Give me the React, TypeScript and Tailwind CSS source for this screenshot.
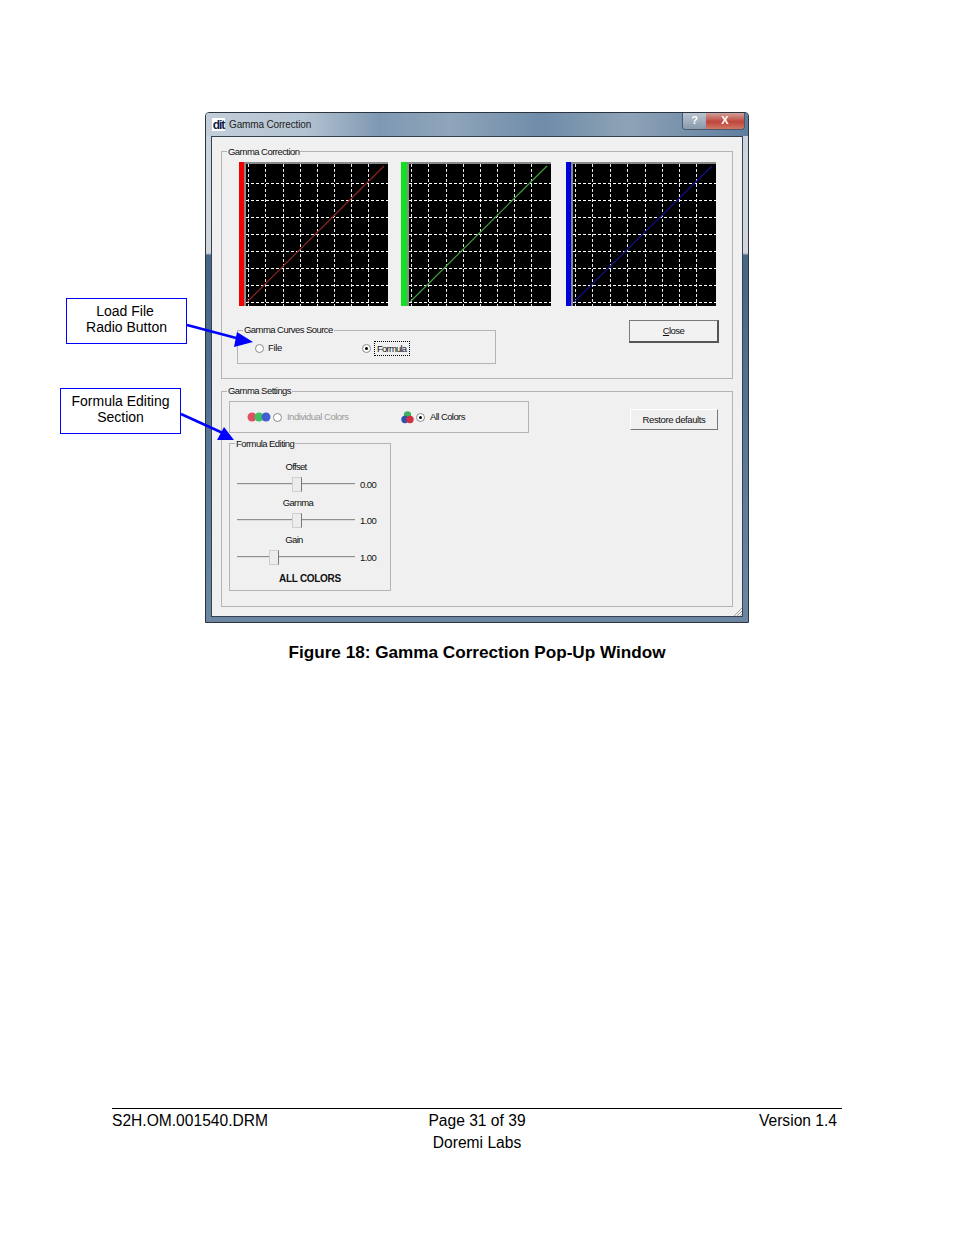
const GRID_X = [2, 19, 37, 54, 71, 88, 105, 122]
const GRID_Y = [19, 36, 53, 70, 87, 104, 121, 138]

const PLOTS = [
  { bar: 'w-[5px] bg-[#f00000]', line: '#8a2424', gap: 'ml-[17px]', width: 'w-[149px]' },
  { bar: 'w-[6px] bg-[#10e020]', line: '#3f9f3f', gap: 'ml-[13px]', width: 'w-[150px]' },
  { bar: 'w-[5px] bg-[#0000d8]', line: '#10108a', gap: 'ml-[15px]', width: 'w-[150px]' },
]

const SLIDERS = [
  { label: 'Offset', value: '0.00', labelPad: 'pl-0', thumb: 'left-[55px]', height: 'h-[36px]' },
  { label: 'Gamma', value: '1.00', labelPad: 'pl-[4px]', thumb: 'left-[55px]', height: 'h-[37px]' },
  { label: 'Gain', value: '1.00', labelPad: 'pr-[4px]', thumb: 'left-[32px]', height: 'h-[36px]' },
]

function Plot({ bar, line, gap, width }: { bar: string; line: string; gap: string; width: string }) {
  return (
    <div className={`flex h-[144px] ${gap} ${width}`}>
      <div className={`shrink-0 ${bar}`} />
      <svg className="h-full flex-1 border-l-2 border-t-2 border-[#8a8a8a] bg-black" viewBox="0 0 142 142" preserveAspectRatio="none">
        {GRID_X.map(x => (
          <line key={x} x1={x + 0.5} y1="0" x2={x + 0.5} y2="142" stroke="#e8e8e8" strokeWidth="1" strokeDasharray="3 2" shapeRendering="crispEdges" />
        ))}
        {GRID_Y.map(y => (
          <line key={y} x1="0" y1={y + 0.5} x2="142" y2={y + 0.5} stroke="#fff" strokeWidth="1" strokeDasharray="3 2" shapeRendering="crispEdges" />
        ))}
        <line x1="1" y1="138" x2="138" y2="2" stroke={line} strokeWidth="1.2" />
      </svg>
    </div>
  )
}

function Group({ title, className, legend, children }: { title: string; className: string; legend: string; children?: React.ReactNode }) {
  return (
    <div className={`relative border border-[#b4b4b4] ${className}`}>
      <span className={`absolute left-[5px] whitespace-nowrap bg-[#f0f0f0] px-px leading-[12px] tracking-[-0.55px] ${legend}`}>{title}</span>
      {children}
    </div>
  )
}

function Radio({ checked }: { checked?: boolean }) {
  return (
    <span className="flex h-[9px] w-[9px] shrink-0 items-center justify-center rounded-full border border-[#8a8a8a] bg-white">
      {checked && <span className="h-[3px] w-[3px] rounded-full bg-black" />}
    </span>
  )
}

function Slider({ label, value, labelPad, thumb, height }: { label: string; value: string; labelPad: string; thumb: string; height: string }) {
  return (
    <div className={height}>
      <div className={`w-[118px] text-center leading-[12px] tracking-[-0.7px] ${labelPad}`}>{label}</div>
      <div className="mt-[4px] flex items-center">
        <div className="relative h-[16px] w-[118px]">
          <div className="absolute top-[6px] h-[2px] w-full border-b border-[#dcdcdc] bg-[#8f8f8f]" />
          <div className={`absolute top-0 h-[15px] w-[10px] border border-[#cfcfcf] border-r-[#777] bg-[#ececec] ${thumb}`} />
        </div>
        <span className="ml-[5px] leading-[12px] tracking-[-0.6px]">{value}</span>
      </div>
    </div>
  )
}

export default function App() {
  return (
    <div className="flex h-[1235px] w-[954px] flex-col bg-white pt-[112px] font-['Liberation_Sans',Arial,sans-serif] text-black">
      <div className="relative ml-[205px] flex h-[511px] w-[544px] flex-col rounded-t-[4px] border border-[#2c3440] bg-[linear-gradient(180deg,#c9d4df_0%,#d2d6da_27.5%,#466686_28%,#6d87a3_100%)]">
        <div className="flex h-[23px] shrink-0 items-center rounded-t-[3px] bg-[linear-gradient(90deg,#c2ced9_0%,#b4c3d2_18%,#7f98b2_32%,#8fa5ba_45%,#6f8ca8_62%,#8ea3b7_78%,#5f7e9e_100%)] pl-[6px]">
          <span className="flex h-[13px] w-[13px] items-center justify-center bg-white text-[12px] font-bold leading-none tracking-[-1px] text-[#10204a]">dit</span>
          <span className="ml-[4px] text-[10px] tracking-[-0.15px] text-[#222]">Gamma Correction</span>
          <div className="ml-auto mr-[3px] flex h-[17px] self-start overflow-hidden rounded-b-[4px] border border-t-0 border-[#48586a] text-[11px] font-bold leading-[14px] text-white">
            <span className="w-[23px] bg-[linear-gradient(180deg,#b8c4d0,#8a9aac)] text-center">?</span>
            <span className="w-[38px] bg-[linear-gradient(180deg,#d0a098,#c0453a_55%,#d07868)] text-center">X</span>
          </div>
        </div>

        <div className="mx-[5px] h-[481px] border border-[#33424f] bg-[#f0f0f0] pt-[14px] text-[9.5px] text-[#111]">
          <Group title="Gamma Correction" legend="-top-[6px]" className="mx-[9px] h-[228px]">
            <div className="flex pt-[10px]">
              {PLOTS.map(p => <Plot key={p.bar} {...p} />)}
            </div>
            <div className="flex items-start">
              <Group title="Gamma Curves Source" legend="-top-[7px]" className="ml-[15px] mt-[24px] h-[34px] w-[259px]">
                <div className="flex h-full items-center pt-[2px]">
                  <span className="ml-[17px]"><Radio /></span>
                  <span className="ml-[4px] tracking-[-0.3px]">File</span>
                  <span className="ml-[80px]"><Radio checked /></span>
                  <span className="ml-[3px] w-[36px] border border-dotted border-black px-[2px] leading-[13px] tracking-[-0.8px]">Formula</span>
                </div>
              </Group>
              <button className="ml-[133px] mt-[14px] h-[23px] w-[90px] border border-b-2 border-r-2 border-[#7a7a7a] border-b-[#555] border-r-[#555] bg-[#f2f2f2] tracking-[-0.6px]">
                <span className="underline">C</span>lose
              </button>
            </div>
          </Group>

          <Group title="Gamma Settings" legend="-top-[7px]" className="mx-[9px] mt-[12px] h-[216px] px-[7px] pt-[9px]">
            <div className="flex items-start">
              <div className="flex h-[32px] w-[300px] items-center border border-[#b4b4b4]">
                <svg className="ml-[17px] h-[10px] w-[24px]" viewBox="0 0 24 10">
                  <circle cx="5" cy="5" r="4.5" fill="#e05060" />
                  <circle cx="12" cy="5" r="4.5" fill="#40c060" />
                  <circle cx="19" cy="5" r="4.5" fill="#4060d0" />
                </svg>
                <span className="ml-[2px]"><Radio /></span>
                <span className="ml-[5px] w-[62px] whitespace-nowrap tracking-[-0.52px] text-[#9a9a9a]">Individual Colors</span>
                <svg className="ml-[52px] h-[13px] w-[13px]" viewBox="0 0 13 13">
                  <circle cx="6.5" cy="4" r="3.7" fill="#40b060" />
                  <circle cx="4" cy="8.5" r="3.7" fill="#3050b0" />
                  <circle cx="9" cy="8.5" r="3.7" fill="#d03040" />
                </svg>
                <span className="ml-[2px]"><Radio checked /></span>
                <span className="ml-[5px] tracking-[-0.58px]">All Colors</span>
              </div>
              <button className="ml-[101px] mt-[8px] h-[21px] w-[88px] border border-[#fff] border-b-[#777] border-r-[#777] bg-[#f0f0f0] pt-px tracking-[-0.4px]">Restore defaults</button>
            </div>
            <Group title="Formula Editing" legend="-top-[6px]" className="mt-[10px] h-[148px] w-[162px] pl-[7px] pt-[17px]">
              {SLIDERS.map(s => <Slider key={s.label} {...s} />)}
              <div className="mt-[3px] pr-[7px] text-center text-[10px] font-bold leading-[12px] tracking-[-0.3px]">ALL COLORS</div>
            </Group>
          </Group>
        </div>

        <svg className="absolute bottom-[5px] right-[5px] h-[10px] w-[10px]" viewBox="0 0 10 10">
          <path d="M1 9 9 1M4 9l5-5M7 9l2-2" stroke="#a0a0a0" strokeWidth="1" />
        </svg>
      </div>

      <div className="mt-[19px] text-center text-[17.15px] font-bold leading-[20px]">Figure 18: Gamma Correction Pop-Up Window</div>

      <div className="mb-[81px] ml-[112px] mt-auto w-[730px] border-t border-black pt-px text-[15.6px] leading-[22px]">
        <div className="flex">
          <span className="flex-1">S2H.OM.001540.DRM</span>
          <span>Page 31 of 39</span>
          <span className="flex-1 text-right"><span className="pr-[5px]">Version 1.4</span></span>
        </div>
        <div className="text-center">Doremi Labs</div>
      </div>

      <div className="absolute left-[66px] top-[298px] flex h-[46px] w-[121px] flex-col items-center justify-center border border-[#0000ff] bg-white pb-[4px] text-[14px] leading-[16px]">
        <span className="pr-[3px]">Load File</span>
        <span>Radio Button</span>
      </div>
      <div className="absolute left-[60px] top-[388px] flex h-[46px] w-[121px] flex-col items-center justify-center border border-[#0000ff] bg-white pb-[4px] text-[14px] leading-[16px]">
        <span>Formula Editing</span>
        <span>Section</span>
      </div>

      {/* callout arrows run over the dialog */}
      <svg className="pointer-events-none absolute left-0 top-0 h-[1235px] w-[954px]" viewBox="0 0 954 1235">
        <line x1="187" y1="325" x2="240" y2="339" stroke="#0000ff" strokeWidth="2.5" />
        <polygon points="237,332 234,347 253,342" fill="#0000ff" />
        <line x1="181" y1="414" x2="225" y2="434" stroke="#0000ff" strokeWidth="2.5" />
        <polygon points="224,427 217,440 234,440" fill="#0000ff" />
      </svg>
    </div>
  )
}
